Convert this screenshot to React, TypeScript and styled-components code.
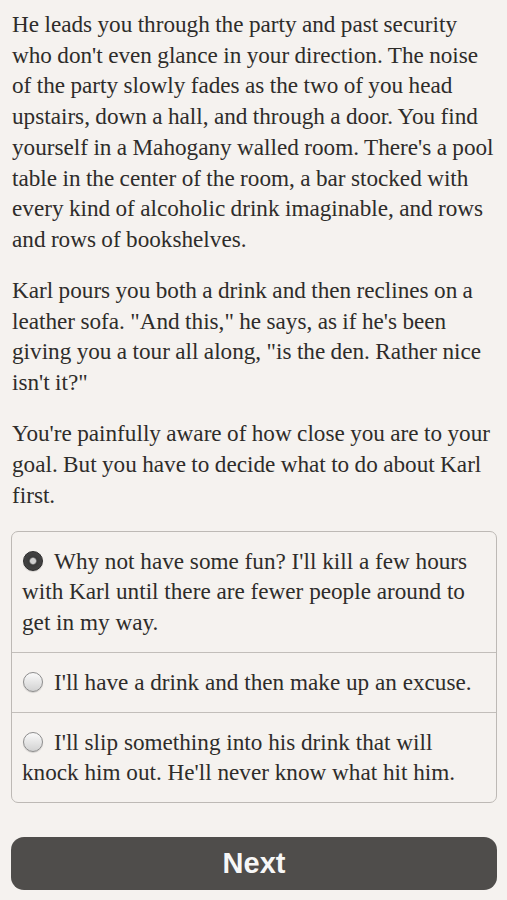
import React, { useState } from "react";
import styled, { createGlobalStyle } from "styled-components";

const GlobalStyle = createGlobalStyle`
  html, body {
    margin: 0;
    padding: 0;
    background: #f5f2ef;
  }
`;

const options = [
  "Why not have some fun? I'll kill a few hours with Karl until there are fewer people around to get in my way.",
  "I'll have a drink and then make up an excuse.",
  "I'll slip something into his drink that will knock him out. He'll never know what hit him.",
];

const App: React.FC = () => {
  const [selected, setSelected] = useState(0);

  return (
    <Page>
      <GlobalStyle />
      <Story>
        <p>
          He leads you through the party and past security who don't even
          glance in your direction. The noise of the party slowly fades as the
          two of you head upstairs, down a hall, and through a door. You find
          yourself in a Mahogany walled room. There's a pool table in the
          center of the room, a bar stocked with every kind of alcoholic drink
          imaginable, and rows and rows of bookshelves.
        </p>
        <p>
          Karl pours you both a drink and then reclines on a leather sofa.
          "And this," he says, as if he's been giving you a tour all along, "is
          the den. Rather nice isn't it?"
        </p>
        <p>
          You're painfully aware of how close you are to your goal. But you
          have to decide what to do about Karl first.
        </p>
      </Story>

      <Choices>
        {options.map((text, i) => (
          <Choice key={i} onClick={() => setSelected(i)}>
            <Radio $checked={selected === i} />
            {text}
          </Choice>
        ))}
      </Choices>

      <NextButton type="button">Next</NextButton>
    </Page>
  );
};

export default App;

const Page = styled.div`
  padding: 9px 10px 10px 11px;
  font-family: "Liberation Serif", "Times New Roman", serif;
  color: #2e2c2a;
`;

const Story = styled.div`
  font-size: 23.2px;
  line-height: 30.7px;
  word-spacing: -0.4px;

  > p {
    margin: 0 0 20.4px;
    padding-left: 1px;
  }
`;

const Choices = styled.div`
  margin-top: 19.5px;
  border: 1.5px solid #bdb9b5;
  border-radius: 7px;
  overflow: hidden;
`;

const Choice = styled.label`
  display: block;
  padding: 14px 10px 14.5px;
  font-size: 23.2px;
  line-height: 30.5px;
  cursor: pointer;

  & + & {
    border-top: 1.5px solid #c2beba;
  }
`;

const Radio = styled.span<{ $checked: boolean }>`
  display: inline-block;
  box-sizing: border-box;
  width: 20px;
  height: 20px;
  margin: 0 11px 0 1px;
  vertical-align: -2px;
  border-radius: 50%;
  border: 1.5px solid ${(p) => (p.$checked ? "#2a2a2a" : "#8d8d8d")};
  background: ${(p) =>
    p.$checked
      ? "radial-gradient(circle at 50% 50%, #d0d0d0 0 2.5px, #3a3a3a 4px, #4a4a4a 100%)"
      : "linear-gradient(#fafafa, #d2d2d2)"};
  box-shadow: 0 1px 1px rgba(0, 0, 0, 0.15);
`;

const NextButton = styled.button`
  display: block;
  width: 100%;
  height: 53px;
  margin-top: 34px;
  border: none;
  border-radius: 13px;
  background: #4f4d4b;
  color: #f7f7f7;
  font-family: "Liberation Sans", Arial, sans-serif;
  font-weight: 700;
  font-size: 29px;
  cursor: pointer;
`;
